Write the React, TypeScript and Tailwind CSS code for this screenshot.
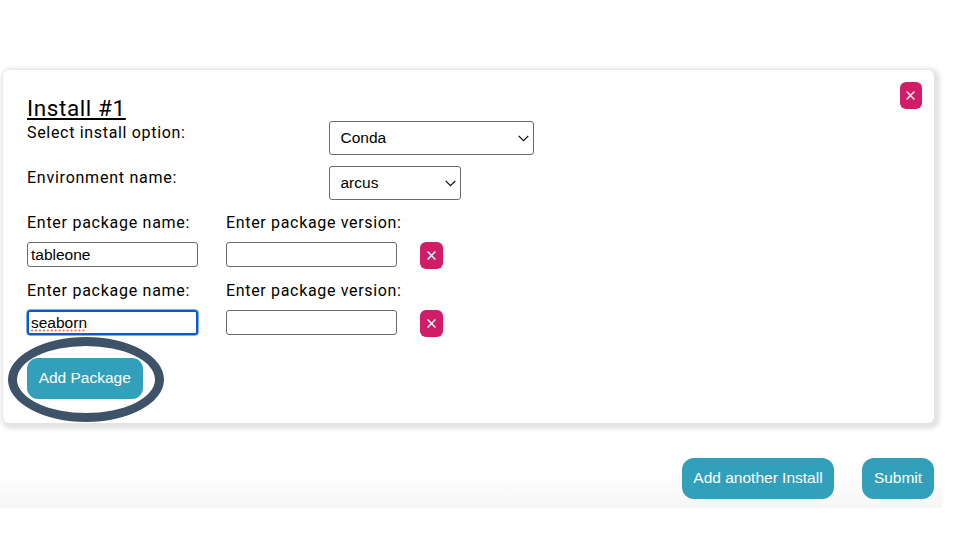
import React from "react";

const labelClass =
  "block h-[22px] whitespace-nowrap font-['Roboto','Noto_Sans',sans-serif] text-[16px] leading-[22px]";

function RemoveButton() {
  return (
    <button className="flex h-[27px] w-[22.5px] shrink-0 items-center justify-center rounded-[6px] bg-[#d11d67]" aria-label="Remove">
      <svg width="9" height="9" viewBox="0 0 9 9" fill="none" stroke="white" strokeWidth="1.4">
        <path d="M0.6 0.6 8.4 8.4M8.4 0.6 0.6 8.4" />
      </svg>
    </button>
  );
}

function SelectBox({ value, className }: { value: string; className: string }) {
  return (
    <div className={`flex h-[34px] items-center justify-between rounded-[3px] border border-[#6b6b6b] bg-white pl-[10.5px] pr-[4px] text-[15.5px] ${className}`}>
      <span>{value}</span>
      <svg width="11" height="7" viewBox="0 0 11 7" fill="none" stroke="#111" strokeWidth="1.3">
        <path d="M0.7 0.9 5.5 5.7 10.3 0.9" />
      </svg>
    </div>
  );
}

function PackageRow({ name, focused }: { name: string; focused?: boolean }) {
  return (
    <div className="flex">
      <div className="w-[199px]">
        <span className={`${labelClass} tracking-[0.73px]`}>Enter package name:</span>
        <div
          className={`mt-[8px] flex h-[25px] w-[170.5px] items-center rounded-[3px] text-[15.5px] leading-[18px] ${
            focused ? "border-2 border-[#0a5ccb] pl-[2px] shadow-[0_0_0_0.5px_#0a5ccb]" : "border border-[#6b6b6b] pl-[3px]"
          }`}
        >
          <span className="relative">
            {name}
            {focused && (
              <svg className="absolute left-0 top-[15px]" width="56" height="3" viewBox="0 0 56 3">
                <path d="M1 1.5H56" stroke="#ff5f57" strokeWidth="2" strokeLinecap="round" strokeDasharray="0.1 3.85" />
              </svg>
            )}
          </span>
        </div>
      </div>
      <div className="w-[194px]">
        <span className={`${labelClass} tracking-[0.67px]`}>Enter package version:</span>
        <div className="mt-[8px] h-[25px] w-[170.5px] rounded-[3px] border border-[#6b6b6b]" />
      </div>
      <div className="h-[57px] pt-[30px]">
        <RemoveButton />
      </div>
    </div>
  );
}

const buttonClass =
  "flex h-[41px] items-center justify-center whitespace-nowrap bg-[#329fbb] pb-[1px] text-[15.5px] text-white";

export default function App() {
  return (
    <div className="h-[540px] w-[960px] overflow-hidden bg-white font-['Liberation_Sans',Arial,sans-serif] text-black">
      <main className="h-[508px] w-[943px] bg-[linear-gradient(to_bottom,white_474px,#f6f6f6_508px)] pl-[3px] pt-[69.5px]">
        <section className="flex h-[353.5px] w-[931px] justify-between rounded-[6px] bg-white pl-[24px] pr-[12px] shadow-[2px_2px_4px_4px_rgba(0,0,0,0.11)]">
          <div className="pt-[25.5px]">
            <h1 className="h-[26px] whitespace-nowrap font-['Roboto','Noto_Sans',sans-serif] text-[22.5px] leading-[26px] tracking-[0.6px] underline decoration-2 underline-offset-[2px]">
              Install #1
            </h1>
            <div className="flex">
              <span className={`${labelClass} w-[302px] pt-px tracking-[0.68px]`}>Select install option:</span>
              <SelectBox value="Conda" className="w-[204.5px]" />
            </div>
            <div className="mt-[11px] flex">
              <span className={`${labelClass} w-[302px] pt-px tracking-[0.76px]`}>Environment name:</span>
              <SelectBox value="arcus" className="w-[131.5px]" />
            </div>
            <div className="mt-[12px] flex flex-col gap-[11px]">
              <PackageRow name="tableone" />
              <PackageRow name="seaborn" focused />
            </div>
            <div className="relative mt-[21px] w-[115.5px]">
              <button className={`${buttonClass} w-[115.5px] rounded-[11px]`}>Add Package</button>
              <div className="pointer-events-none absolute left-[-19px] top-[-21px] h-[85px] w-[156px] rounded-[50%] border-[9px] border-[#3f5368]" />
            </div>
          </div>
          <div className="pt-[12px]">
            <RemoveButton />
          </div>
        </section>
        <div className="mt-[34.5px] flex w-[931px] justify-end gap-[28px]">
          <button className={`${buttonClass} w-[152px] rounded-[12px]`}>Add another Install</button>
          <button className={`${buttonClass} w-[72px] rounded-[12px]`}>Submit</button>
        </div>
      </main>
    </div>
  );
}
